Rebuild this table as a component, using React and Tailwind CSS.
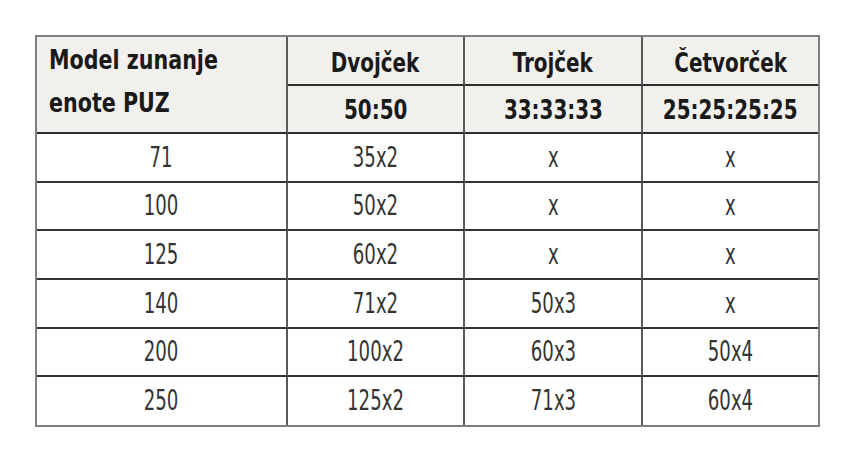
import React from 'react';

const rows = [
  ['71', '35x2', 'x', 'x'],
  ['100', '50x2', 'x', 'x'],
  ['125', '60x2', 'x', 'x'],
  ['140', '71x2', '50x3', 'x'],
  ['200', '100x2', '60x3', '50x4'],
  ['250', '125x2', '71x3', '60x4'],
];

const heights = ['h-[49px]', 'h-[48px]', 'h-[49px]', 'h-[49px]', 'h-[48px]', 'h-[48px]'];

const font = { fontFamily: '"DejaVu Sans Condensed", "DejaVu Sans", sans-serif' };

// condensed look: squeeze the glyphs horizontally
const Narrow = ({ children, left }) => (
  <span className={'inline-block whitespace-nowrap ' + (left ? 'origin-left scale-x-[0.85]' : 'scale-x-[0.82]')}>
    {children}
  </span>
);

const Thin = ({ children }) => (
  <span className="inline-block whitespace-nowrap scale-x-[0.72]">{children}</span>
);

const App = () => {
  return (
    <div className="w-[855px] h-[461px] bg-white pt-[35px] pl-[35px]" style={font}>
      <table className="table-fixed border-separate border-spacing-0 border-2 border-[#7f7f7f] w-[785px]">
        <colgroup>
          <col className="w-[251px]" />
          <col className="w-[177px]" />
          <col className="w-[178px]" />
          <col className="w-[175px]" />
        </colgroup>
        <thead className="bg-[#f2f0ec] text-[#1a1a1a] font-bold text-[27px]">
          <tr className="h-[49px]">
            <th rowSpan={2} className="text-left align-top pl-[12px] pt-[1px] leading-[43px] font-bold border-r-2 border-b-2 border-r-[#5a5a5a] border-b-[#2e2e2e]">
              <Narrow left>Model zunanje</Narrow>
              <br />
              <Narrow left>enote PUZ</Narrow>
            </th>
            <th className="font-bold border-r-2 border-b-2 border-r-[#5a5a5a] border-b-[#2e2e2e] pt-[5px]"><Narrow>Dvojček</Narrow></th>
            <th className="font-bold border-r-2 border-b-2 border-r-[#5a5a5a] border-b-[#2e2e2e] pt-[5px]"><Narrow>Trojček</Narrow></th>
            <th className="font-bold border-b-2 border-b-[#2e2e2e] pt-[5px]"><Narrow>Četvorček</Narrow></th>
          </tr>
          <tr className="h-[48px]">
            <th className="font-bold border-r-2 border-b-2 border-r-[#5a5a5a] border-b-[#2e2e2e] pt-[3px]"><Narrow>50:50</Narrow></th>
            <th className="font-bold border-r-2 border-b-2 border-r-[#5a5a5a] border-b-[#2e2e2e] pt-[3px]"><Narrow>33:33:33</Narrow></th>
            <th className="font-bold border-b-2 border-b-[#2e2e2e] pt-[3px]"><Narrow>25:25:25:25</Narrow></th>
          </tr>
        </thead>
        <tbody className="text-[28px] text-[#333333] font-extralight">
          {rows.map((r, i) => (
            <tr key={i} className={heights[i]}>
              {r.map((c, j) => (
                <td
                  key={j}
                  className={
                    'text-center p-0 ' +
                    (j < 3 ? 'border-r-2 border-r-[#5a5a5a] ' : '') +
                    (i < rows.length - 1 ? 'border-b-2 border-b-[#333333]' : '')
                  }
                >
                  <Thin>{c}</Thin>
                </td>
              ))}
            </tr>
          ))}
        </tbody>
      </table>
    </div>
  );
};

export default App;
